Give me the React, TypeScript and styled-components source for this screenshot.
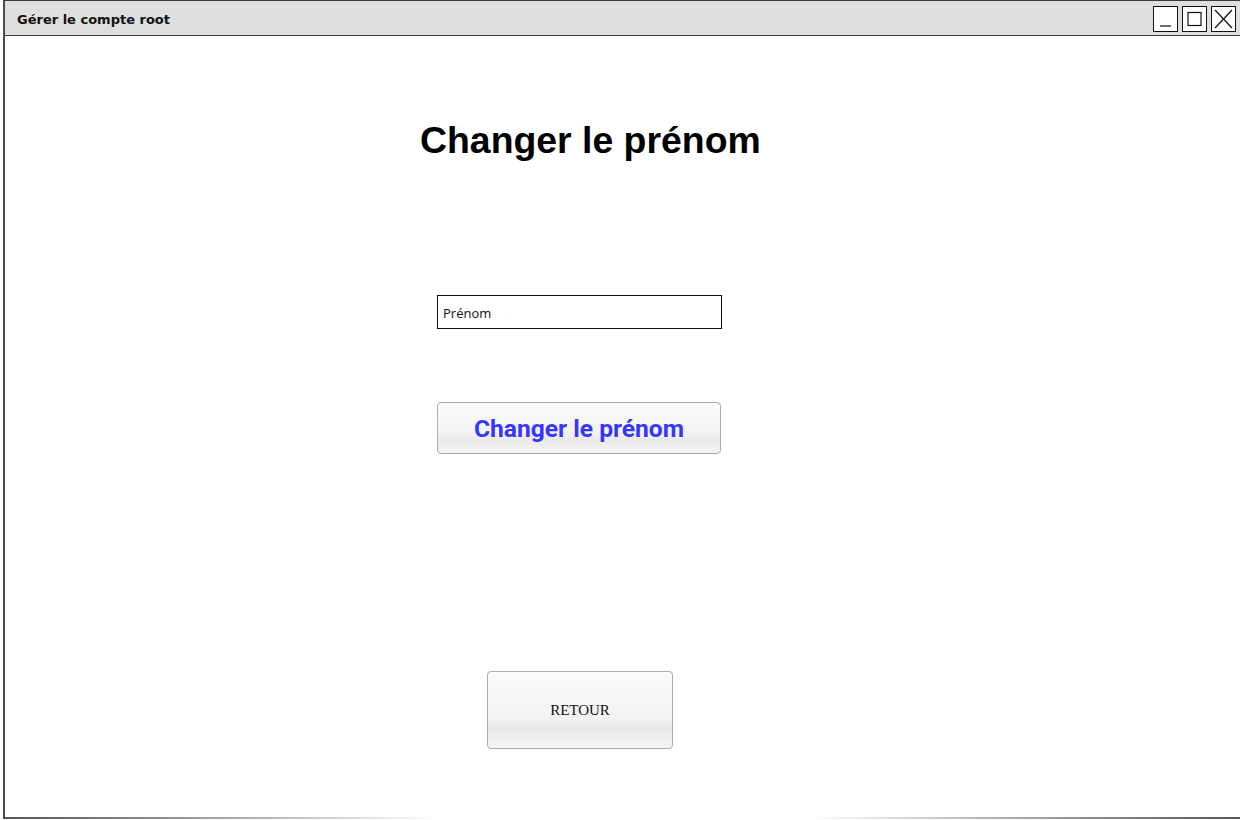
import styled, { createGlobalStyle } from 'styled-components';

const GlobalStyle = createGlobalStyle`
  html, body {
    margin: 0;
    padding: 0;
    background: #ffffff;
    overflow: hidden;
  }
`;

const Window = styled.div`
  margin-left: 3px;
  width: 1240px;
  height: 819px;
  display: flex;
  flex-direction: column;
  border-left: 2px solid #4a4a4a;
  border-top: 1px solid #3a3a3a;
  box-sizing: border-box;
  background: #ffffff;
`;

const TitleBar = styled.div`
  height: 35px;
  flex-shrink: 0;
  box-sizing: border-box;
  display: flex;
  align-items: center;
  justify-content: space-between;
  background: #dedede;
  border-bottom: 1px solid #3c3c3c;
  padding: 0 7px 0 12px;
`;

const WindowTitle = styled.span`
  font-family: 'Comic Sans MS', 'DejaVu Sans', sans-serif;
  font-weight: bold;
  font-size: 13px;
  color: #111;
  letter-spacing: 0;
  margin-top: 2px;
`;

const Controls = styled.div`
  display: flex;
  gap: 4px;
  margin-top: 1px;
`;

const ControlBox = styled.div`
  width: 25px;
  height: 26px;
  box-sizing: border-box;
  border: 1px solid #111;
  outline: 1px solid #fff;
  outline-offset: -2px;
  background: #ffffff;
  display: flex;
  align-items: center;
  justify-content: center;
`;

const Content = styled.div`
  flex: 1;
  display: flex;
  flex-direction: column;
  align-items: flex-start;
  padding-left: 432px;
`;

const Heading = styled.h1`
  margin: 83px 0 0 -17px;
  font-family: 'Liberation Sans', Arial, sans-serif;
  font-weight: bold;
  font-size: 37.4px;
  line-height: 42px;
  color: #000;
`;

const NameInput = styled.input`
  margin-top: 134px;
  width: 285px;
  height: 34px;
  box-sizing: border-box;
  border: 1px solid #111;
  padding: 2px 5px 0;
  font-family: 'Open Sans', 'DejaVu Sans', sans-serif;
  font-size: 13px;
  color: #111;
  background: #fff;
  outline: none;
  &::placeholder {
    color: #111;
  }
`;

const SketchButton = styled.button<{ $primary?: boolean }>`
  box-sizing: border-box;
  border: 1px solid #b2a99c;
  border-radius: 4px;
  background: linear-gradient(#fbfbfb 0%, #f3f3f3 60%, #e9e9e9 75%, #f5f5f5 100%);
  cursor: pointer;
  display: flex;
  align-items: center;
  justify-content: center;
  padding: 0;
  ${p =>
    p.$primary
      ? `
    margin-top: 73px;
    width: 284px;
    height: 52px;
    font-family: Roboto, 'Liberation Sans', sans-serif;
    font-weight: bold;
    font-size: 24.6px;
    color: #3636ff;
  `
      : `
    margin: 217px 0 0 50px;
    width: 186px;
    height: 78px;
    font-family: 'Liberation Serif', 'Times New Roman', serif;
    font-size: 15px;
    color: #111;
  `}
`;

const BottomEdge = styled.div`
  height: 2px;
  flex-shrink: 0;
  background: linear-gradient(90deg, #555 0%, #bbb 22%, #fff 35%, #fff 65%, #bbb 78%, #555 100%);
`;

export default function App() {
  return (
    <>
      <GlobalStyle />
      <Window>
        <TitleBar>
          <WindowTitle>Gérer le compte root</WindowTitle>
          <Controls>
            <ControlBox>
              <svg width="23" height="24" viewBox="0 0 23 24">
                <line x1="6" y1="19" x2="17" y2="19" stroke="#111" strokeWidth="1.2" />
              </svg>
            </ControlBox>
            <ControlBox>
              <svg width="23" height="24" viewBox="0 0 23 24">
                <rect x="5" y="5.5" width="13" height="13" fill="none" stroke="#111" strokeWidth="1.2" />
              </svg>
            </ControlBox>
            <ControlBox>
              <svg width="23" height="24" viewBox="0 0 23 24">
                <line x1="3" y1="3" x2="20" y2="21" stroke="#111" strokeWidth="1.2" />
                <line x1="20" y1="3" x2="3" y2="21" stroke="#111" strokeWidth="1.2" />
              </svg>
            </ControlBox>
          </Controls>
        </TitleBar>
        <Content>
          <Heading>Changer le prénom</Heading>
          <NameInput placeholder="Prénom" />
          <SketchButton $primary>Changer le prénom</SketchButton>
          <SketchButton>RETOUR</SketchButton>
        </Content>
        <BottomEdge />
      </Window>
    </>
  );
}
